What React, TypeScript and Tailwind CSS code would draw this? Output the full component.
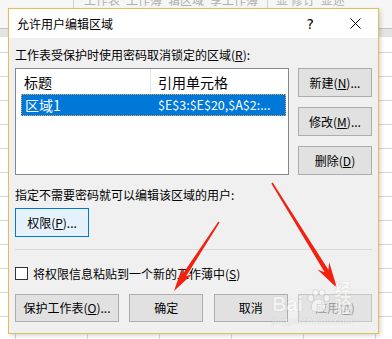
import React from 'react';

const font = { fontFamily: '"Noto Sans CJK SC", "Noto Sans", sans-serif' };

function WinButton({
  children,
  className = '',
  disabled = false,
}: {
  children: React.ReactNode;
  className?: string;
  disabled?: boolean;
}) {
  return (
    <button
      className={`flex items-center justify-center border text-[12px] leading-none ${
        disabled ? 'border-[#c6c6c6] bg-[#e3e3e3] text-[#9a9a9a]' : 'border-[#adadad] bg-[#e1e1e1] text-black'
      } ${className}`}
    >
      {children}
    </button>
  );
}

function Arrows() {
  return (
    <svg className="pointer-events-none absolute left-0 top-0" width={392} height={339} viewBox="0 0 392 339">
      <polygon
        fill="#f2200f"
        points="174,291 192.1,274.2 186.1,276.2 219.6,222.4 218.4,221.6 182.7,274 182.1,267.6"
      />
      <polygon
        fill="#f2200f"
        points="337,288 317.4,269.6 324.6,272.2 271.3,183.4 272.7,182.6 328.4,269.8 329.2,262.2"
      />
    </svg>
  );
}

function Watermark() {
  return (
    <div className="pointer-events-none absolute left-[272px] top-[280px] w-[95px] text-white opacity-60 [text-shadow:0_0_1px_#9a9a9a]">
      <div className="flex items-end">
        <span className="text-[20px] font-bold leading-none" style={{ fontFamily: '"Liberation Sans", sans-serif' }}>
          Bai
        </span>
        <svg width={28} height={24} viewBox="0 0 28 24" className="mx-[2px] mb-[1px]">
          <g fill="#ffffff" stroke="#a8a8a8" strokeWidth={0.6}>
            <ellipse cx={6} cy={9} rx={3} ry={3.6} />
            <ellipse cx={11} cy={3.5} rx={3} ry={3.4} />
            <ellipse cx={17.5} cy={3.5} rx={3} ry={3.4} />
            <ellipse cx={22.5} cy={9} rx={3} ry={3.6} />
            <path d="M14 10 C9 10 5 17 7 21 C9 24 19 24 21 21 C23 17 19 10 14 10 Z" />
          </g>
        </svg>
        <span className="text-[17px] font-bold leading-none" style={font}>
          经验
        </span>
      </div>
      <div className="mt-[3px] text-[9px] leading-none tracking-[0.5px]" style={{ fontFamily: '"Liberation Sans", sans-serif' }}>
        jingyan.baidu.com
      </div>
    </div>
  );
}

export default function App() {
  return (
    <div
      className="relative h-[339px] w-[392px] overflow-hidden bg-white bg-[linear-gradient(to_bottom,#f6f6f6_0px,#f6f6f6_28px,#c4c4c4_28px,#c4c4c4_29px,#e4e4e4_29px,#e4e4e4_37px,transparent_37px),repeating-linear-gradient(to_right,transparent_0px,transparent_15px,#d6d6d6_15px,#d6d6d6_16px,transparent_16px,transparent_72px),repeating-linear-gradient(to_bottom,transparent_0px,transparent_4px,#d6d6d6_4px,#d6d6d6_5px,transparent_5px,transparent_24px)]"
      style={font}
    >
      {/* ribbon behind, mostly cut off */}
      <div className="relative h-[8px] overflow-hidden">
        <div className="absolute left-[73px] top-0 h-[8px] w-px bg-[#d0d0d0]" />
        <div className="absolute left-[267px] top-0 h-[8px] w-px bg-[#d0d0d0]" />
        <div className="-mt-[7px] flex gap-[6px] pl-[84px] text-[12px] leading-[14px] text-[#b0b0b0]">
          <span>工作表</span>
          <span>工作簿</span>
          <span>辑区域</span>
          <span>享工作簿</span>
          <span className="ml-[12px]">显 修订</span>
          <span>显述</span>
        </div>
      </div>

      {/* dialog */}
      <div className="ml-[8px] flex h-[326px] w-[371px] flex-col border border-[#e3be55] bg-[#f0f0f0] shadow-[2px_2px_4px_rgba(0,0,0,0.15)]">
        <div className="flex h-[29px] items-center bg-white pl-[8px] text-[12px] text-black">
          <span className="leading-none">允许用户编辑区域</span>
          <span className="ml-auto mr-[36px] text-[14px] leading-none" style={{ fontFamily: '"DejaVu Sans", sans-serif' }}>
            ?
          </span>
          <svg width={11} height={11} viewBox="0 0 11 11" className="mr-[17px]">
            <path d="M0.5 0.5 L10.5 10.5 M10.5 0.5 L0.5 10.5" stroke="#000" strokeWidth={1} />
          </svg>
        </div>

        <div className="flex flex-1 flex-col px-[6px] pt-[9px]">
          <div className="h-[16px] text-[12px] leading-[16px] text-black">
            工作表受保护时使用密码取消锁定的区域(<u>R</u>):
          </div>

          <div className="mt-[5px] flex gap-[9px]">
            <div className="h-[107px] w-[274px] border border-[#828790] bg-white">
              <div className="flex h-[25px] items-center text-[14px] leading-none text-black">
                <div className="w-[134px] pl-[8px]">标题</div>
                <div className="h-[24px] w-px self-start bg-[#e5e5e5]" />
                <div className="pl-[7px]">引用单元格</div>
              </div>
              <div className="ml-[5px] mr-[2px] flex h-[22px] items-center border border-dotted border-[#e8a868] bg-[#0078d7] text-white">
                <div className="w-[129px] pl-[3px] text-[14px] leading-none">区域1</div>
                <div className="pl-[7px] text-[12.5px] leading-none">$E$3:$E$20,$A$2:...</div>
              </div>
            </div>
            <div className="flex flex-col gap-[10px]">
              <WinButton className="h-[29px] w-[74px]">
                新建(<u>N</u>)...
              </WinButton>
              <WinButton className="h-[29px] w-[74px]">
                修改(<u>M</u>)...
              </WinButton>
              <WinButton className="h-[29px] w-[74px]">
                删除(<u>D</u>)
              </WinButton>
            </div>
          </div>

          <div className="mt-[12px] h-[16px] text-[12px] leading-[16px] text-black">
            指定不需要密码就可以编辑该区域的用户:
          </div>
          <button className="mt-[5px] flex h-[29px] w-[74px] items-center justify-center border border-[#0078d7] bg-[#e5f1fb] text-[12px] leading-none text-black">
            权限(<u>P</u>)...
          </button>

          <div className="mt-[12px] h-px w-full bg-[#d9d9d9]" />

          <div className="mt-[17px] flex h-[13px] items-center gap-[5px]">
            <div className="h-[13px] w-[13px] border border-[#333333] bg-white" />
            <span className="text-[12px] leading-none text-black">
              将权限信息粘贴到一个新的工作薄中(<u>S</u>)
            </span>
          </div>

          <div className="mt-[14px] flex justify-between">
            <WinButton className="h-[28px] w-[104px]">
              保护工作表(<u>O</u>)...
            </WinButton>
            <WinButton className="h-[28px] w-[74px]">确定</WinButton>
            <WinButton className="h-[28px] w-[74px]">取消</WinButton>
            <WinButton className="h-[28px] w-[74px]" disabled>
              应用(<u>A</u>)
            </WinButton>
          </div>
        </div>
      </div>

      <Arrows />
      <Watermark />
    </div>
  );
}
